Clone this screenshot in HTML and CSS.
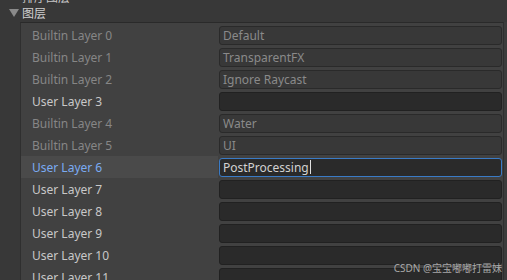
FILE: index.html
```html
<!DOCTYPE html>
<html>
<head>
<meta charset="utf-8">
<link rel="stylesheet" href="styles.css">
</head>
<body>
<div class="top">
  <div class="cut">排序图层</div>
  <div class="header"><span class="tri"></span><span class="htitle">图层</span></div>
</div>
<div class="wrap">
  <div class="gutter"></div>
  <div class="panel">
    <div class="row"><span class="label dim">Builtin Layer 0</span><div class="field off">Default</div></div>
    <div class="row"><span class="label dim">Builtin Layer 1</span><div class="field off">TransparentFX</div></div>
    <div class="row"><span class="label dim">Builtin Layer 2</span><div class="field off">Ignore Raycast</div></div>
    <div class="row"><span class="label">User Layer 3</span><div class="field"></div></div>
    <div class="row"><span class="label dim">Builtin Layer 4</span><div class="field off">Water</div></div>
    <div class="row"><span class="label dim">Builtin Layer 5</span><div class="field off">UI</div></div>
    <div class="row active"><span class="label blue">User Layer 6</span><div class="field focus">PostProcessing<span class="caret"></span></div></div>
    <div class="row"><span class="label">User Layer 7</span><div class="field"></div></div>
    <div class="row"><span class="label">User Layer 8</span><div class="field"></div></div>
    <div class="row"><span class="label">User Layer 9</span><div class="field"></div></div>
    <div class="row"><span class="label">User Layer 10</span><div class="field"></div></div>
    <div class="row"><span class="label">User Layer 11</span><div class="field"></div></div>
  </div>
  <div class="rstrip"></div>
</div>
<div class="wm">CSDN @宝宝嘟嘟打雷妹</div>
</body>
</html>
```

FILE: styles.css
```css
html, body {
  margin: 0;
  padding: 0;
  width: 507px;
  height: 280px;
  overflow: hidden;
  background: #383838;
  font-family: "Noto Sans", "Noto Sans CJK SC", sans-serif;
  font-size: 12px;
  position: relative;
}
.top {
  height: 22px;
  position: relative;
  overflow: hidden;
}
.cut {
  position: absolute;
  left: 22px;
  top: -12px;
  color: #c8c8c8;
  font-size: 12px;
}
.header {
  display: flex;
  align-items: center;
  height: 22px;
  padding-left: 9px;
  padding-top: 4px;
  box-sizing: border-box;
}
.tri {
  width: 0;
  height: 0;
  border-left: 5px solid transparent;
  border-right: 5px solid transparent;
  border-top: 8px solid #8a8a8a;
  margin-right: 3px;
}
.htitle {
  color: #d0d0d0;
  font-size: 12px;
}
.wrap {
  display: flex;
  height: 258px;
}
.gutter {
  width: 20px;
  flex: none;
}
.panel {
  flex: none;
  width: 484px;
  background: #414141;
  border-top: 1px solid #2a2a2a;
  border-left: 1px solid #2f2f2f;
  border-right: 1px solid #2f2f2f;
  box-sizing: border-box;
  padding-top: 1px;
}
.rstrip {
  flex: 1;
  background: #3c3c3c;
}
.row {
  height: 22px;
  display: flex;
  align-items: center;
}
.row.active {
  background: linear-gradient(to right, #4a4a4a 0, #4a4a4a 197px, transparent 197px);
}
.label {
  width: 187px;
  padding-left: 11px;
  flex: none;
  color: #c8c8c8;
  white-space: nowrap;
}
.label.dim { color: #868686; }
.label.blue { color: #7aabf2; }
.field {
  width: 283px;
  height: 19px;
  box-sizing: border-box;
  border: 1px solid #212121;
  border-radius: 3px;
  background: #2a2a2a;
  color: #d2d2d2;
  padding-left: 3px;
  line-height: 17px;
  display: flex;
  align-items: center;
}
.field.off {
  background: #383838;
  border-color: #2a2a2a;
  color: #8a8a8a;
}
.field.focus {
  border-color: #3a7bc6;
  background: #2a2a2a;
}
.caret {
  display: inline-block;
  width: 1px;
  height: 14px;
  background: #e0e0e0;
  margin-left: 1px;
}
.wm {
  position: absolute;
  right: 5px;
  bottom: 5px;
  color: rgba(210,210,210,0.75);
  font-size: 10px;
  font-family: "Noto Sans", "Noto Sans CJK SC", sans-serif;
}
```
